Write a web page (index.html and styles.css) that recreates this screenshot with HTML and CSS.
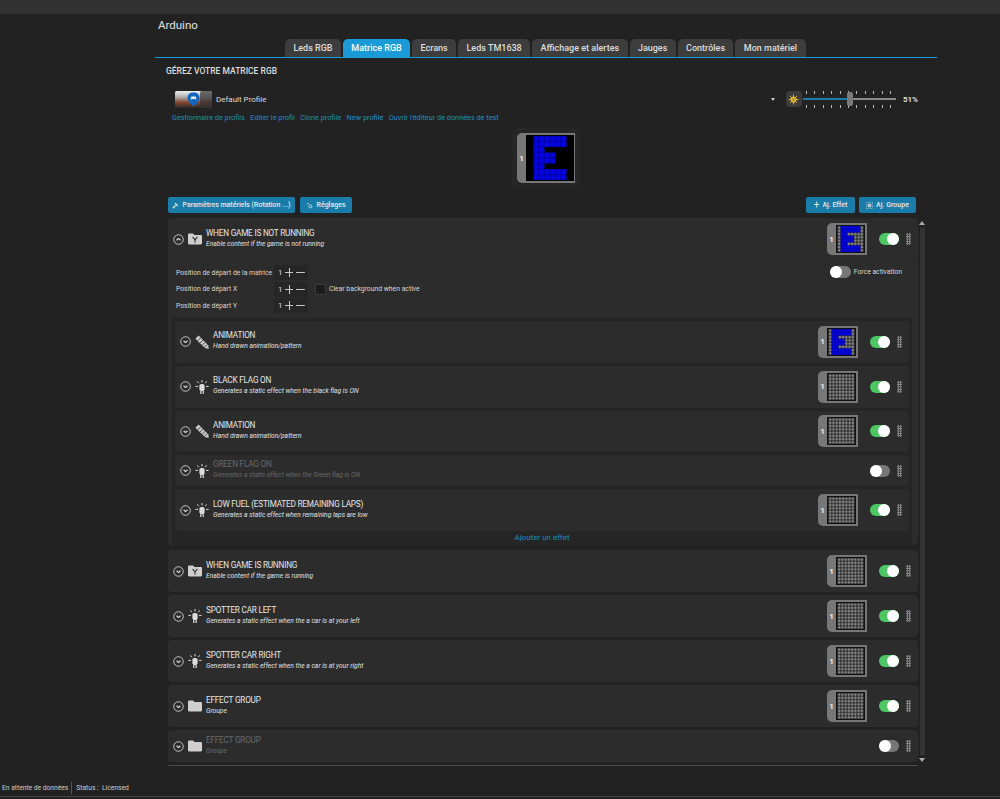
FILE: index.html
```html
<!DOCTYPE html>
<html lang="fr">
<head>
  <meta charset="UTF-8">
  <title>Arduino</title>
  <link rel="stylesheet" href="styles.css">
</head>
<body>
  <svg class="defs" width="0" height="0">
    <defs>
      <pattern id="celGris" width="10" height="10" patternUnits="userSpaceOnUse"><rect x="1.300" y="1.300" width="7.400" height="7.400" fill="#8a8a8a"/></pattern>
      <pattern id="celBleu" width="10" height="10" patternUnits="userSpaceOnUse"><rect x="0.8" y="0.8" width="8.4" height="8.4" fill="#0404e4"/></pattern>
      <symbol id="m-vide" viewBox="0 0 80 80"><rect width="80" height="80" fill="#1a1a1a"/><rect width="80" height="80" fill="url(#celGris)"/></symbol>
      <symbol id="m-e" viewBox="0 0 80 80">
        <rect width="80" height="80" fill="#1a1a1a"/><rect width="80" height="80" fill="url(#celGris)"/>
        <path d="M10 0H70V20H30V30H50V50H30V60H70V80H10Z" fill="#000090"/>
        <path d="M10 0H70V20H30V30H50V50H30V60H70V80H10Z" fill="url(#celBleu)"/>
      </symbol>
      <symbol id="m-grand" viewBox="0 0 80 80">
        <rect width="80" height="80" fill="#000"/>
        <path d="M10 0H70V20H30V30H50V50H30V60H70V80H10Z" fill="#000090"/>
        <path d="M10 0H70V20H30V30H50V50H30V60H70V80H10Z" fill="url(#celBleu)"/>
      </symbol>
      <symbol id="i-chevron" viewBox="0 0 12 12"><circle cx="6" cy="6" r="5.2" fill="none" stroke="#e4e4e4" stroke-width="0.9"/><path d="M3.9 5.2 6 7.2 8.1 5.2" fill="none" stroke="#e4e4e4" stroke-width="1.2"/></symbol>
      <symbol id="i-chevron-haut" viewBox="0 0 12 12"><circle cx="6" cy="6" r="5.2" fill="none" stroke="#e4e4e4" stroke-width="0.9"/><path d="M3.9 6.8 6 4.8 8.1 6.8" fill="none" stroke="#e4e4e4" stroke-width="1.2"/></symbol>
      <symbol id="i-crayon" viewBox="0 0 14 14"><path d="M.4 3.800 3.600.6 13.200 10.200 13.800 13.800 10.200 13.200Z" fill="#c9c9c9"/><path d="M2.600 6 5.800 2.800M4.800 8.200 8 5M7 10.400 10.200 7.200M9.200 12.600 12.400 9.400" stroke="#2c2c2c" stroke-width="0.8"/></symbol>
      <symbol id="i-lampe" viewBox="0 0 14 14"><path d="M4.400 5.400C4.400 3.400 9.600 3.400 9.600 5.400V10H8.800V14H7.600V11H6.400V14H5.200V10H4.400Z" fill="#dcdcdc"/><path d="M7 0V2.400M2.400 1.400 3.800 3.200M11.600 1.400 10.200 3.200M.4 6.400H3M11 6.400H13.600" stroke="#dcdcdc" stroke-width="1"/></symbol>
      <symbol id="i-dossier" viewBox="0 0 14 11"><path d="M0 1.200C0 .5.5 0 1.200 0H5L6.400 1.400H12.800C13.500 1.400 14 1.900 14 2.600V9.800C14 10.500 13.500 11 12.800 11H1.200C.5 11 0 10.500 0 9.800Z" fill="#cfcfcf"/></symbol>
      <symbol id="i-condition" viewBox="0 0 14 11"><path d="M0 1.200C0 .5.5 0 1.200 0H5L6.400 1.400H12.800C13.500 1.400 14 1.900 14 2.600V9.800C14 10.500 13.500 11 12.800 11H1.200C.5 11 0 10.500 0 9.800Z" fill="#cfcfcf"/><path d="M7 9.200V6.400L4.600 3.400M7 6.400 9.400 3.400" fill="none" stroke="#333" stroke-width="1.100"/></symbol>
      <symbol id="i-soleil" viewBox="0 0 12 12"><g stroke="#d9b53a" stroke-width="1"><path d="M6 .6V11.400M.6 6H11.400M2.200 2.200 9.800 9.800M9.800 2.200 2.200 9.800"/></g><circle cx="6" cy="6" r="3.400" fill="#d9b53a"/><circle cx="6" cy="6" r="1.500" fill="#b08f24"/></symbol>
      <symbol id="i-cle" viewBox="0 0 8 8"><path d="M1 7 4 4M3.500 1.500 6.500 4.500" stroke="#e8e8e8" stroke-width="1.500" fill="none"/></symbol>
      <symbol id="i-reglages" viewBox="0 0 8 8"><path d="M1 2H3" stroke="#e8e8e8" stroke-width="1"/><circle cx="5" cy="5" r="1.700" fill="none" stroke="#e8e8e8" stroke-width="0.900"/></symbol>
      <symbol id="i-groupe" viewBox="0 0 8 8"><path d="M.5.5H7.500V7.500H.5Z" fill="none" stroke="#b8c8d4" stroke-width="0.800" stroke-dasharray="1 .6"/><rect x="2" y="2" width="4" height="4" fill="#b8c8d4"/></symbol>
    </defs>
  </svg>

  <div class="barre-haut"></div>

  <main class="page">
    <div class="appareil">Arduino</div>

    <nav class="onglets">
      <a class="onglet">Leds RGB</a>
      <a class="onglet actif">Matrice RGB</a>
      <a class="onglet">Ecrans</a>
      <a class="onglet">Leds TM1638</a>
      <a class="onglet">Affichage et alertes</a>
      <a class="onglet">Jauges</a>
      <a class="onglet">Contrôles</a>
      <a class="onglet">Mon matériel</a>
    </nav>

    <h2 class="titre-section">GÉREZ VOTRE MATRICE RGB</h2>

    <div class="contenu">
      <div class="profil">
        <svg class="profil-image" viewBox="0 0 37 17">
          <defs>
            <linearGradient id="ciel" x1="0" y1="0" x2="0" y2="1">
              <stop offset="0" stop-color="#efefef"/><stop offset="0.35" stop-color="#b0b0b0"/><stop offset="0.65" stop-color="#8a4a35"/><stop offset="1" stop-color="#2a2a2a"/>
            </linearGradient>
          </defs>
          <rect width="37" height="17" rx="1.500" fill="url(#ciel)"/>
          <rect x="25" width="12" height="17" rx="1.500" fill="#333" opacity="0.7"/>
          <path d="M18.500 1.500C22 1.500 24.500 3.500 24.500 7 24.500 10.500 21 13 18.500 15.500 16 13 12.500 10.500 12.500 7 12.500 3.500 15 1.500 18.500 1.500Z" fill="#1465c0"/>
          <path d="M15.500 9 16.300 5.500H20.700L21.500 9 20 8H17Z" fill="#e8eef4"/>
        </svg>
        <span class="profil-nom">Default Profile</span>
        <span class="caret"></span>
        <div class="luminosite">
          <span class="soleil"><svg width="11" height="11"><use href="#i-soleil"/></svg></span>
          <div class="curseur">
            <div class="graduation"></div>
            <div class="piste"><div class="piste-pleine"></div><div class="poignee"></div></div>
            <div class="graduation"></div>
          </div>
          <span class="pourcent">51%</span>
        </div>
      </div>

      <div class="liens">
        <a>Gestionnaire de profils</a>
        <a>Editer le profil</a>
        <a>Clone profile</a>
        <a>New profile</a>
        <a>Ouvrir l'éditeur de données de test</a>
      </div>

      <div class="apercu">
        <div class="apercu-halo">
          <div class="vignette grande"><span>1</span><svg><use href="#m-grand"/></svg></div>
        </div>
      </div>

      <div class="actions">
        <button class="bouton b-materiel"><svg><use href="#i-cle"/></svg>Paramètres matériels (Rotation ...)</button>
        <button class="bouton b-reglages"><svg><use href="#i-reglages"/></svg>Réglages</button>
        <span class="espace"></span>
        <button class="bouton b-effet"><b>+</b>Aj. Effet</button>
        <button class="bouton b-groupe"><svg><use href="#i-groupe"/></svg>Aj. Groupe</button>
      </div>

      <div class="liste">
        <div class="panneaux">
          <section class="groupe ouvert">
            <div class="ligne">
              <svg class="chevron"><use href="#i-chevron-haut"/></svg>
              <svg class="icone"><use href="#i-condition"/></svg>
              <div class="textes"><h3>WHEN GAME IS NOT RUNNING</h3><p>Enable content if the game is not running</p></div>
              <div class="vignette"><span>1</span><svg><use href="#m-e"/></svg></div>
              <span class="bascule on"></span>
              <span class="poignee-points"></span>
            </div>

            <div class="reglages">
              <div class="positions">
                <div class="position"><label>Position de départ de la matrice</label><div class="pas"><span>1</span><i class="plus"></i><i class="moins"></i></div></div>
                <div class="position"><label>Position de départ X</label><div class="pas"><span>1</span><i class="plus"></i><i class="moins"></i></div><span class="case"></span><span class="case-texte">Clear background when active</span></div>
                <div class="position"><label>Position de départ Y</label><div class="pas"><span>1</span><i class="plus"></i><i class="moins"></i></div></div>
              </div>
              <div class="forcer"><span class="bascule"></span><span>Force activation</span></div>
            </div>

            <div class="effets">
              <div class="ligne">
                <svg class="chevron"><use href="#i-chevron"/></svg>
                <svg class="icone"><use href="#i-crayon"/></svg>
                <div class="textes"><h3>ANIMATION</h3><p>Hand drawn animation/pattern</p></div>
                <div class="vignette"><span>1</span><svg><use href="#m-e"/></svg></div>
                <span class="bascule on"></span>
                <span class="poignee-points"></span>
              </div>
              <div class="ligne">
                <svg class="chevron"><use href="#i-chevron"/></svg>
                <svg class="icone"><use href="#i-lampe"/></svg>
                <div class="textes"><h3>BLACK FLAG ON</h3><p>Generates a static effect when the black flag is ON</p></div>
                <div class="vignette"><span>1</span><svg><use href="#m-vide"/></svg></div>
                <span class="bascule on"></span>
                <span class="poignee-points"></span>
              </div>
              <div class="ligne">
                <svg class="chevron"><use href="#i-chevron"/></svg>
                <svg class="icone"><use href="#i-crayon"/></svg>
                <div class="textes"><h3>ANIMATION</h3><p>Hand drawn animation/pattern</p></div>
                <div class="vignette"><span>1</span><svg><use href="#m-vide"/></svg></div>
                <span class="bascule on"></span>
                <span class="poignee-points"></span>
              </div>
              <div class="ligne inactive">
                <svg class="chevron"><use href="#i-chevron"/></svg>
                <svg class="icone"><use href="#i-lampe"/></svg>
                <div class="textes"><h3>GREEN FLAG ON</h3><p>Generates a static effect when the Green flag is ON</p></div>
                <span class="bascule"></span>
                <span class="poignee-points"></span>
              </div>
              <div class="ligne">
                <svg class="chevron"><use href="#i-chevron"/></svg>
                <svg class="icone"><use href="#i-lampe"/></svg>
                <div class="textes"><h3>LOW FUEL (ESTIMATED REMAINING LAPS)</h3><p>Generates a static effect when remaining laps are low</p></div>
                <div class="vignette"><span>1</span><svg><use href="#m-vide"/></svg></div>
                <span class="bascule on"></span>
                <span class="poignee-points"></span>
              </div>
              <a class="ajouter">Ajouter un effet</a>
            </div>
          </section>

          <div class="ligne">
            <svg class="chevron"><use href="#i-chevron"/></svg>
            <svg class="icone"><use href="#i-condition"/></svg>
            <div class="textes"><h3>WHEN GAME IS RUNNING</h3><p>Enable content if the game is running</p></div>
            <div class="vignette"><span>1</span><svg><use href="#m-vide"/></svg></div>
            <span class="bascule on"></span>
            <span class="poignee-points"></span>
          </div>
          <div class="ligne">
            <svg class="chevron"><use href="#i-chevron"/></svg>
            <svg class="icone"><use href="#i-lampe"/></svg>
            <div class="textes"><h3>SPOTTER CAR LEFT</h3><p>Generates a static effect when the a car is at your left</p></div>
            <div class="vignette"><span>1</span><svg><use href="#m-vide"/></svg></div>
            <span class="bascule on"></span>
            <span class="poignee-points"></span>
          </div>
          <div class="ligne">
            <svg class="chevron"><use href="#i-chevron"/></svg>
            <svg class="icone"><use href="#i-lampe"/></svg>
            <div class="textes"><h3>SPOTTER CAR RIGHT</h3><p>Generates a static effect when the a car is at your right</p></div>
            <div class="vignette"><span>1</span><svg><use href="#m-vide"/></svg></div>
            <span class="bascule on"></span>
            <span class="poignee-points"></span>
          </div>
          <div class="ligne">
            <svg class="chevron"><use href="#i-chevron"/></svg>
            <svg class="icone"><use href="#i-dossier"/></svg>
            <div class="textes"><h3>EFFECT GROUP</h3><p>Groupe</p></div>
            <div class="vignette"><span>1</span><svg><use href="#m-vide"/></svg></div>
            <span class="bascule on"></span>
            <span class="poignee-points"></span>
          </div>
          <div class="ligne inactive">
            <svg class="chevron"><use href="#i-chevron"/></svg>
            <svg class="icone"><use href="#i-dossier"/></svg>
            <div class="textes"><h3>EFFECT GROUP</h3><p>Groupe</p></div>
            <span class="bascule"></span>
            <span class="poignee-points"></span>
          </div>
        </div>

        <div class="ascenseur">
          <span class="fleche haut"></span>
          <span class="rail"></span>
          <span class="fleche bas"></span>
        </div>
      </div>
    </div>
  </main>

  <footer class="statut">
    <span>En attente de données</span>
    <span class="sep">Status :&nbsp; Licensed</span>
  </footer>
</body>
</html>
```

FILE: styles.css
```css
* {
  box-sizing: border-box;
}

body {
  margin: 0;
  height: 799px;
  overflow: hidden;
  display: flex;
  flex-direction: column;
  background-color: #222;
  color: #ddd;
  font-family: Roboto, "Open Sans", sans-serif;
  font-size: 8px;
}

.defs {
  display: block;
}

.barre-haut {
  height: 14px;
  background-color: #323232;
}

.page {
  flex: 1;
  width: 782px;
  margin-left: 155px;
}

.appareil {
  height: 25px;
  padding-left: 3px;
  font-size: 11.500px;
  line-height: 22px;
  color: #e2e2e2;
}

.onglets {
  display: flex;
  gap: 2px;
  height: 19px;
  padding-left: 130px;
  border-bottom: 1px solid #1a9ad6;
}

.onglet {
  height: 18px;
  padding: 0 8.400px;
  border-radius: 5px 5px 0 0;
  background-color: #3d3d3d;
  color: #ddd;
  font-size: 9px;
  font-weight: 500;
  line-height: 18px;
  white-space: nowrap;
}

.onglet.actif {
  background-color: #1a9ad6;
  color: #fff;
}

.titre-section {
  height: 26px;
  margin: 0;
  padding-left: 11px;
  font-size: 8.500px;
  font-weight: 500;
  line-height: 26px;
  color: #ddd;
}

.contenu {
  width: 770px;
  margin-left: 13px;
}

.profil {
  display: flex;
  align-items: center;
  width: 750px;
  height: 24px;
  margin-top: 3px;
  padding-left: 7px;
}

.profil-image {
  width: 37px;
  height: 17px;
}

.profil-nom {
  margin-left: 4px;
  font-size: 8px;
}

.caret {
  width: 0;
  height: 0;
  margin-left: auto;
  margin-right: 11px;
  border-top: 3px solid #ccc;
  border-left: 2.500px solid transparent;
  border-right: 2.500px solid transparent;
}

.luminosite {
  display: flex;
  align-items: center;
}

.soleil {
  display: flex;
  align-items: center;
  justify-content: center;
  width: 16px;
  height: 16px;
  border-radius: 4px;
  background-color: #3c3c3c;
}

.curseur {
  display: flex;
  flex-direction: column;
  justify-content: space-between;
  width: 93px;
  height: 17px;
  margin-left: 1px;
}

.graduation {
  height: 3px;
  margin: 0 3px;
  background: repeating-linear-gradient(90deg, #bbb 0, #bbb 1px, transparent 1px, transparent 8.400px);
}

.piste {
  position: relative;
  height: 2px;
  background-color: #8a8a8a;
}

.piste-pleine {
  width: 46px;
  height: 2px;
  background-color: #1a7ca8;
}

.poignee {
  position: absolute;
  left: 44px;
  top: -6px;
  width: 6px;
  height: 14px;
  border-radius: 2px;
  background-color: #7a7a7a;
}

.pourcent {
  margin-left: 7px;
  font-size: 8px;
  font-weight: 700;
}

.liens {
  display: flex;
  gap: 5.500px;
  height: 10px;
  margin-top: 2px;
  margin-bottom: -1px;
  padding-left: 4px;
  line-height: 10px;
  color: #1a8ec4;
  font-size: 7.300px;
}

.apercu {
  display: flex;
  width: 756px;
  margin-top: 6px;
  padding-left: 344px;
}

.apercu-halo {
  display: flex;
  align-items: center;
  justify-content: center;
  width: 68px;
  height: 60px;
  border-radius: 5px;
  background-color: #262626;
}

.vignette {
  display: flex;
  align-items: center;
  flex-shrink: 0;
  width: 40px;
  height: 32px;
  margin-left: auto;
  padding: 2px 2px 2px 0;
  border-radius: 5px 0 0 5px;
  background-color: #777;
}

.vignette span {
  width: 9px;
  text-align: center;
  color: #eee;
  font-size: 8px;
  font-weight: 700;
}

.vignette svg {
  width: 29px;
  height: 28px;
  padding: 1px;
  background-color: #111;
}

.vignette.grande {
  width: 58px;
  height: 50px;
  margin-left: 0;
  padding: 2px 1px 2px 0;
}

.vignette.grande span {
  width: 9px;
}

.vignette.grande svg {
  width: 48px;
  height: 46px;
  padding: 1px;
  background-color: #000;
}

.actions {
  display: flex;
  gap: 5px;
  width: 748px;
  height: 16px;
  margin-top: 9px;
}

.espace {
  flex: 1;
}

.bouton {
  display: flex;
  align-items: center;
  justify-content: center;
  gap: 3px;
  height: 16px;
  padding: 0;
  border: 0;
  border-radius: 2px;
  background-color: #1a7ca8;
  color: #e8e8e8;
  font-family: inherit;
  font-size: 7px;
  font-weight: 500;
  white-space: nowrap;
}

.bouton svg {
  width: 7px;
  height: 7px;
}

.bouton b {
  font-size: 10px;
  font-weight: 400;
  line-height: 10px;
}

.b-materiel {
  width: 127px;
}

.b-reglages {
  width: 52px;
}

.b-effet {
  width: 49px;
}

.b-groupe {
  width: 57px;
  margin-left: -1px;
}

.liste {
  display: flex;
  margin-top: 5px;
  padding-bottom: 3px;
}

.panneaux {
  display: flex;
  flex-direction: column;
  gap: 3px;
  width: 750px;
  padding-bottom: 3px;
  border-bottom: 1px solid #4a4a4a;
}

.groupe {
  height: 327px;
  margin-bottom: 2px;
  border-radius: 4px;
  background-color: #2c2c2c;
}

.ligne {
  display: flex;
  align-items: center;
  height: 42px;
  padding: 0 7px 0 5px;
  border-radius: 4px;
  background-color: #2c2c2c;
}

.ligne.inactive {
  height: 32px;
}

.ligne.inactive .textes {
  opacity: 0.3;
}

.effets .ligne.inactive {
  height: 31px;
}

.chevron {
  flex-shrink: 0;
  width: 11px;
  height: 11px;
}

.icone {
  flex-shrink: 0;
  width: 14px;
  height: 14px;
  margin-left: 4px;
}

.textes {
  margin-left: 4px;
  min-width: 0;
  margin-top: -1px;
  white-space: nowrap;
}

.textes h3 {
  margin: 0;
  font-size: 8.200px;
  font-weight: 400;
  letter-spacing: -0.200px;
  line-height: 11px;
  color: #e6e6e6;
}

.textes p {
  margin: 0;
  font-size: 6.700px;
  font-style: italic;
  line-height: 11px;
  color: #e0e0e0;
}

.bascule {
  position: relative;
  flex-shrink: 0;
  width: 20px;
  height: 12px;
  margin-left: auto;
  border-radius: 6px;
  background-color: #777;
}

.bascule::after {
  content: "";
  position: absolute;
  top: 0;
  left: 0;
  width: 12px;
  height: 12px;
  border-radius: 50%;
  background-color: #fff;
}

.bascule.on {
  margin-left: 12px;
  background-color: #4cc764;
}

.bascule.on::after {
  left: 8px;
}

.poignee-points {
  flex-shrink: 0;
  width: 5px;
  height: 12px;
  margin-left: 7px;
  background-image: radial-gradient(circle, #9a9a9a 0.800px, transparent 1px);
  background-size: 2.500px 2.400px;
}

.reglages {
  display: flex;
  justify-content: space-between;
  height: 58px;
  padding: 5px 16px 0 8px;
}

.positions {
  display: flex;
  flex-direction: column;
  gap: 1.500px;
}

.position {
  display: flex;
  align-items: center;
  height: 15px;
}

.position label {
  width: 98px;
  font-size: 6.800px;
  color: #d8d8d8;
  white-space: nowrap;
}

.pas {
  display: flex;
  align-items: center;
  width: 34px;
  height: 15px;
  padding-left: 4px;
  background-color: #262626;
  font-size: 8px;
}

.pas span {
  width: 7px;
}

.pas i {
  position: relative;
  width: 9px;
  height: 9px;
  margin-right: 3px;
  background: linear-gradient(#c8c8c8, #c8c8c8) center / 9px 1px no-repeat;
}

.pas .plus::after {
  content: "";
  position: absolute;
  left: 4px;
  top: 0;
  width: 1px;
  height: 9px;
  background-color: #c8c8c8;
}

.case {
  width: 11px;
  height: 11px;
  margin-left: 7px;
  border-radius: 1px;
  background-color: #1c1c1c;
  border: 1px solid #3a3a3a;
}

.case-texte {
  margin-left: 3px;
  font-size: 6.800px;
  color: #d8d8d8;
  white-space: nowrap;
}

.forcer {
  display: flex;
  align-items: center;
  gap: 3px;
  height: 14px;
  font-size: 6.800px;
  color: #d8d8d8;
}

.forcer .bascule {
  width: 21px;
  margin-left: 0;
}

.effets {
  display: flex;
  flex-direction: column;
  gap: 3px;
  height: 227px;
  margin: 0 6px 0 4px;
  padding: 3px 3px 0;
  border-radius: 0 0 4px 4px;
  background-color: #252525;
}

.ajouter {
  height: 11px;
  text-align: center;
  line-height: 7px;
  color: #1a8ec4;
  font-size: 8px;
}

.ascenseur {
  display: flex;
  flex-direction: column;
  align-items: center;
  width: 8px;
}

.fleche {
  width: 0;
  height: 0;
  border-left: 3.500px solid transparent;
  border-right: 3.500px solid transparent;
}

.fleche.haut {
  margin-top: 3px;
  border-bottom: 4px solid #aaa;
}

.fleche.bas {
  margin-bottom: 4px;
  border-top: 4px solid #aaa;
}

.rail {
  flex: 1;
  width: 5px;
  margin: 3px 0;
  background-color: #333;
}

.statut {
  display: flex;
  align-items: center;
  height: 18px;
  margin-bottom: 2px;
  padding-left: 2px;
  border-bottom: 1px solid #444;
  font-size: 6.700px;
  color: #ccc;
}

.sep {
  margin-left: 3px;
  padding-left: 4px;
  border-left: 1px solid #555;
  line-height: 12px;
}
```
